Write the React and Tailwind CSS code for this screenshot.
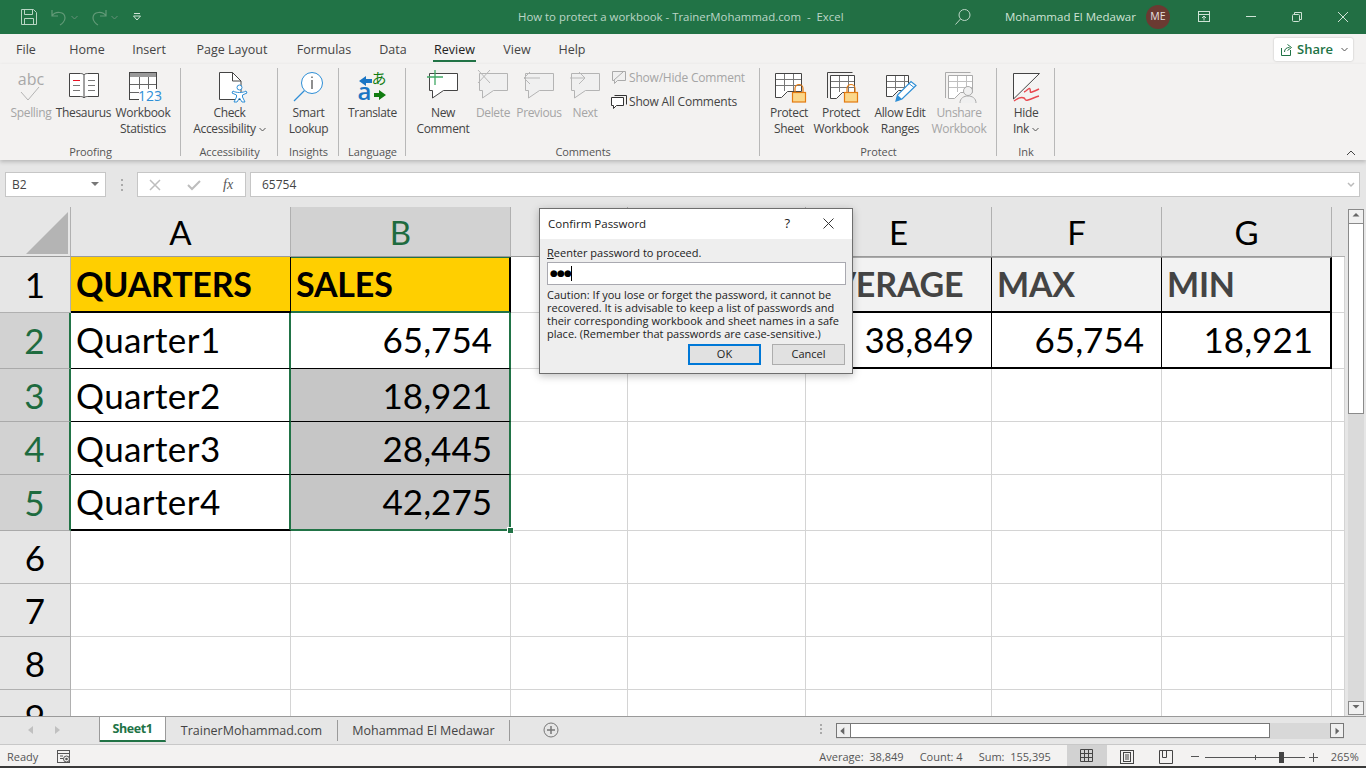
import React from "react";

const seg = "font-['Open_Sans','Noto_Sans',sans-serif]";
const calibri = "font-['Lato','Open_Sans',sans-serif]";

/* ---------- icons ---------- */
const Svg = ({ w = 32, h = 32, className = "", children }) => (
  <svg width={w} height={h} viewBox={`0 0 ${w} ${h}`} className={`overflow-visible ${className}`} fill="none">{children}</svg>
);

const AbcIcon = () => (
  <div className="relative w-[32px] h-[32px]">
    <div className="absolute top-0 left-0 w-[32px] text-center text-[16px] leading-[14px] text-[#a8a8a8]">abc</div>
    <svg width="32" height="32" className="absolute left-0 top-0" fill="none"><path d="M6 20l7 8 11-13" stroke="#b4b4b4" /></svg>
  </div>
);
const BookIcon = () => (
  <Svg>
    <path d="M1.500 1.500h11c1.500 0 3 .5 3.500 1.500.5-1 2-1.500 3.500-1.500h11v23h-11c-1.500 0-3 .5-3.500 1.500-.5-1-2-1.500-3.500-1.500h-11z" fill="#fff" stroke="#444" />
    <path d="M16 3v23" stroke="#444" />
    <path d="M5 8.500h7" stroke="#e81123" /><path d="M5 13.500h7M5 18.500h7M20 8.500h7M20 13.500h7M20 18.500h7" stroke="#777" />
  </Svg>
);
const StatsIcon = () => (
  <Svg>
    <rect x="2.500" y=".5" width="27" height="27" fill="#fff" stroke="#444" />
    <rect x="3" y="1" width="26" height="4" fill="#999" />
    <path d="M3 12.500h26M3 20.500h9M12.500 5v23M21.500 5v14" stroke="#666" />
    <rect x="12" y="17" width="18" height="12" fill="#fff" />
    <text x="11" y="29" fontSize="14" fill="#2f8fd6" fontFamily="Open Sans">123</text>
  </Svg>
);
const AccessIcon = () => (
  <Svg w={36} h={32}>
    <path d="M7.500.5h13l8.500 8.500v18.500H7.500z" fill="#fff" stroke="#444" />
    <path d="M20.500.5v8.500h8.500" stroke="#444" />
    <circle cx="27.500" cy="15.500" r="2.500" fill="#fff" stroke="#2f8fd6" />
    <path d="M21 19c3 2 10 2 13 0l1 2-4.500 2v2l2.500 5h-3l-2.500-4-2.500 4h-3l2.500-5v-2l-4.500-2z" fill="#fff" stroke="#2f8fd6" />
  </Svg>
);
const SmartIcon = () => (
  <Svg>
    <circle cx="19" cy="11" r="10.500" fill="#fff" stroke="#2f8fd6" />
    <path d="M11.500 18.500L1 29" stroke="#2f8fd6" strokeWidth="1.300" />
    <path d="M19 8v9" stroke="#444" strokeWidth="1.200" /><path d="M19 4.500v1.500" stroke="#444" strokeWidth="1.200" />
  </Svg>
);
const TranslateIcon = () => (
  <div className="relative w-[32px] h-[32px]">
    <svg width="32" height="32" className="absolute left-0 top-0">
      <path d="M2 9l7-5v3h6v4H9v3z" fill="#1a75c4" />
      <path d="M29 23l-7 5v-3h-5v-4h5v-3z" fill="#107c10" />
    </svg>
    <span className="absolute left-[15px] top-[-4px] text-[15px] leading-[20px] text-[#107c10] font-['Noto_Sans_CJK_JP',sans-serif]">あ</span>
    <span className={`absolute left-[1px] top-[7px] text-[24px] leading-[24px] font-semibold text-[#1a75c4] ${seg}`}>a</span>
  </div>
);
const Bubble = ({ stroke = "#444", fill = "#fff" }) => (
  <path d="M3.500 3.500h28v17h-14l-11 7.500v-7.500h-3z" fill={fill} stroke={stroke} />
);
const NewCIcon = () => (
  <Svg w={34} h={34} className="-mt-[2px]">
    <Bubble />
    <path d="M9 0v15M1 7h16" stroke="#3fa864" strokeWidth="1.300" />
  </Svg>
);
const DelCIcon = () => (
  <Svg w={34} h={34} className="-mt-[2px]">
    <Bubble stroke="#b4b4b4" fill="#f0f0f0" />
    <path d="M2 0l12 13M14 0L2 13" stroke="#b8b8b8" />
  </Svg>
);
const PrevCIcon = () => (
  <Svg w={34} h={34} className="-mt-[2px]">
    <Bubble stroke="#b4b4b4" fill="#f0f0f0" />
    <path d="M18 8H2M8 2L2 8l6 6" stroke="#b8b8b8" />
  </Svg>
);
const NextCIcon = () => (
  <Svg w={34} h={34} className="-mt-[2px]">
    <Bubble stroke="#b4b4b4" fill="#f0f0f0" />
    <path d="M2 8h15M11 2l6 6-6 6" stroke="#b8b8b8" />
  </Svg>
);
const SmallC1 = () => (
  <Svg w={16} h={16}>
    <path d="M1.500 1.500h13v9h-8l-3 3v-3h-2z" stroke="#aaa" fill="#f0f0f0" />
    <path d="M3 10l9-8" stroke="#aaa" />
  </Svg>
);
const SmallC2 = () => (
  <Svg w={16} h={16}>
    <path d="M3.500 1.500h12v9" stroke="#333" />
    <path d="M.5 3.500h12v8h-7l-3 3v-3h-2z" stroke="#333" fill="#fff" />
  </Svg>
);
const Lock = ({ x = 0, y = 0 }) => (
  <g transform={`translate(${x} ${y})`}>
    <path d="M3 8.500V4.500a4 4 0 0 1 8 0v4" stroke="#e37a10" strokeWidth="1.200" />
    <rect x=".5" y="8.500" width="13" height="9.500" fill="#fbd78a" stroke="#e37a10" strokeWidth="1.200" />
  </g>
);
const SheetGrid = ({ stroke = "#444", cell = "#777", x = 2, y = 1, w = 26, h = 24 }) => (
  <g>
    <path d={`M${x + .5} ${y + .5}h${w}v${h - 6}h-${w - 12}l-6 6h-6z`} fill="#fff" stroke={stroke} />
    <path d={`M${x + 9.500} ${y + 1}v${h - 7}M${x + 18.500} ${y + 1}v${h - 7}M${x + 1} ${y + 6.500}h${w - 1}M${x + 1} ${y + 12.500}h${w - 1}`} stroke={cell} />
  </g>
);
const ProtSheet = () => (
  <Svg><SheetGrid /><Lock x={19} y={12} /></Svg>
);
const ProtBook = () => (
  <Svg>
    <path d="M2.500 26V.5h25" stroke="#444" />
    <SheetGrid x={5} y={3} w={24} h={23} />
    <Lock x={19} y={12} />
  </Svg>
);
const AllowEdit = () => (
  <Svg>
    <SheetGrid x={2} y={3} w={22} h={21} />
    <path d="M12 29l1.500-6L27 9.500l5 4L18 27z" fill="#fff" stroke="#2f8fd6" strokeWidth="1.200" />
    <path d="M12 29l1.500-6 4.500 4z" fill="#2f8fd6" />
    <path d="M25 11.500l5 4" stroke="#2f8fd6" />
  </Svg>
);
const Unshare = () => (
  <Svg>
    <path d="M2.500 26V.5h25" stroke="#aaa" />
    <SheetGrid x={5} y={3} w={24} h={23} stroke="#aaa" cell="#c0c0c0" />
    <circle cx="25" cy="19" r="4.500" fill="#f0f0f0" stroke="#aaa" />
    <path d="M17 31c0-5 4-7 8-7s8 2 8 7" fill="#f0f0f0" stroke="#aaa" />
  </Svg>
);
const HideInk = () => (
  <Svg>
    <path d="M3.500 1.500h26L3.500 27z" fill="#fafafa" stroke="#444" />
    <path d="M14 20c3-1 5-5 6-3s-1 4 2 3 5-2 7-3" stroke="#e8484f" strokeWidth="1.400" />
    <path d="M4 29c4-3 8-4 10-3s0 3 4 2 7-3 11-4" stroke="#e8484f" strokeWidth="1.400" />
  </Svg>
);
const Chevron = ({ className = "" }) => (
  <svg width="7" height="5" viewBox="0 0 7 5" className={className} fill="none"><path d="M.5 1l3 3 3-3" stroke="#555" /></svg>
);

/* ---------- ribbon ---------- */
const RBtn = ({ icon, l1, l2, chev, dis, w }) => (
  <div className={`flex flex-col items-center shrink-0 ${w}`}>
    <div className="h-[33px] flex items-start justify-center">{icon}</div>
    <div className={`text-[12px] leading-[16px] text-center whitespace-nowrap tracking-[-0.35px] ${dis ? "text-[#a5a5a5]" : "text-[#444]"}`}>{l1}</div>
    {l2 && (
      <div className={`text-[12px] leading-[16px] text-center whitespace-nowrap tracking-[-0.35px] flex items-center justify-center gap-[3px] ${dis ? "text-[#a5a5a5]" : "text-[#444]"}`}>
        {l2}{chev && <Chevron />}
      </div>
    )}
  </div>
);

const Group = ({ label, w, children, left }) => (
  <div className={`relative flex flex-col h-[92px] mt-[4px] shrink-0 ${w}`}>
    <div className={`flex h-[77px] pt-[4px] ${left ? `justify-start ${left}` : "justify-center"}`}>{children}</div>
    <div className="text-[11px] leading-[14px] tracking-[-0.1px] text-center text-[#555] whitespace-nowrap">{label}</div>
    <div className="absolute right-0 top-0 w-[1px] h-[88px] bg-[#b8b8b8]" />
  </div>
);

const Tab = ({ children, active, w }) => (
  <div className={`relative h-[28px] flex items-center justify-center text-[12.500px] ${w} ${active ? "text-[#222] font-medium" : "text-[#444]"}`}>
    {children}
    {active && <div className="absolute left-0 right-0 bottom-[2px] h-[2px] bg-[#217346]" />}
  </div>
);

/* ---------- grid ---------- */
const colW = ["w-[220px]", "w-[220px]", "w-[117px]", "w-[178px]", "w-[186px]", "w-[170px]", "w-[170px]", "w-[13px]"];
const rows = [
  { n: "1", h: "h-[56px]" }, { n: "2", h: "h-[56px]", sel: true }, { n: "3", h: "h-[53px]", sel: true },
  { n: "4", h: "h-[53px]", sel: true }, { n: "5", h: "h-[56px]", sel: true }, { n: "6", h: "h-[53px]" },
  { n: "7", h: "h-[53px]" }, { n: "8", h: "h-[53px]" }, { n: "9", h: "h-[27px]", cut: true },
];

const cellData = {
  "1-0": { t: "QUARTERS", b: true, bg: "bg-[#ffcf00]", cls: "border-r-black border-b-[2px] border-b-black" },
  "1-1": { t: "SALES", b: true, bg: "bg-[#ffcf00]", cls: "border-r-[2px] border-r-black border-b-[2px] border-b-[#217346] border-t border-t-[#217346]" },
  "1-4": { t: "AVERAGE", b: true, bg: "bg-[#f2f2f2]", grey: true, cls: "border-r-black border-b-[2px] border-b-black border-t border-t-[#aaa]" },
  "1-5": { t: "MAX", b: true, bg: "bg-[#f2f2f2]", grey: true, cls: "border-r-black border-b-[2px] border-b-black border-t border-t-[#aaa]" },
  "1-6": { t: "MIN", b: true, bg: "bg-[#f2f2f2]", grey: true, cls: "border-r-[2px] border-r-black border-b-[2px] border-b-black border-t border-t-[#aaa]" },
  "2-0": { t: "Quarter1", label: true, cls: "border-r-[2px] border-r-[#217346] border-b-black pb-[2px]" },
  "3-0": { t: "Quarter2", label: true, cls: "border-r-[2px] border-r-[#217346] border-b-black" },
  "4-0": { t: "Quarter3", label: true, cls: "border-r-[2px] border-r-[#217346] border-b-black" },
  "5-0": { t: "Quarter4", label: true, cls: "border-r-[2px] border-r-[#217346] border-b-[2px] border-b-black pb-[2px]" },
  "2-1": { t: "65,754", right: true, cls: "border-r-[2px] border-r-[#217346] border-b-black pb-[2px]" },
  "3-1": { t: "18,921", right: true, bg: "bg-[#c6c6c6]", cls: "border-r-[2px] border-r-[#217346] border-b-black" },
  "4-1": { t: "28,445", right: true, bg: "bg-[#c6c6c6]", cls: "border-r-[2px] border-r-[#217346] border-b-black" },
  "5-1": { t: "42,275", right: true, bg: "bg-[#c6c6c6]", cls: "border-r-[2px] border-r-[#217346] border-b-[2px] border-b-[#217346] pb-[2px]" },
  "2-4": { t: "38,849", right: true, cls: "border-r-black border-b-[2px] border-b-black pb-[2px]" },
  "2-5": { t: "65,754", right: true, cls: "border-r-black border-b-[2px] border-b-black pb-[2px]" },
  "2-6": { t: "18,921", right: true, cls: "border-r-[2px] border-r-black border-b-[2px] border-b-black pb-[2px]" },
};

const Cell = ({ r, c }) => {
  const d = cellData[`${r}-${c}`];
  const base = `${colW[c]} shrink-0 h-full border-r border-b flex items-center overflow-hidden border-[#d4d4d4] ${calibri}`;
  if (!d) return <div className={`${base} bg-white`} />;
  return (
    <div className={`${base} ${d.bg || "bg-white"} ${d.cls} ${d.b ? "font-bold text-[34px] tracking-[-0.2px] pl-[5px] pb-[2px]" : "text-[35px] pl-[5px]"} ${d.label ? "tracking-[0.4px]" : ""} ${d.grey ? "text-[#444]" : "text-black"} ${d.right ? "justify-end pr-[17px]" : ""}`}>
      <span className="whitespace-nowrap">{d.t}</span>
    </div>
  );
};

const ArrowBtn = ({ dir }) => {
  const p = { up: "M4 7l4-4 4 4z", down: "M4 4l4 4 4-4z", left: "M9 3L4 7.500l5 4.500z", right: "M6 3l5 4.500L6 12z" }[dir];
  return <svg width="14" height="14" viewBox="0 0 16 15"><path d={p} fill="#666" /></svg>;
};

export default function App() {
  return (
    <div className={`relative w-[1366px] h-[768px] overflow-hidden bg-white flex flex-col ${seg}`}>
      {/* title bar */}
      <div className="h-[34px] shrink-0 bg-[#217346] flex items-center text-[#cfe3d6] text-[12px]">
        <div className="flex items-center pl-[20px] w-[518px] gap-[12px] shrink-0">
          <svg width="18" height="18" fill="none" viewBox="0 0 18 18"><path d="M1.500 1.500h12l3 3v12h-15z" stroke="#b9d6c4" /><path d="M4.500 1.500v5h8v-5M4.500 16.500v-6h9v6" stroke="#b9d6c4" /></svg>
          <div className="flex items-center gap-[3px]">
            <svg width="18" height="18" fill="none" viewBox="0 0 18 18"><path d="M2 2v6h6M2 8c3-5 13-5 13 2 0 3-3 6-5 7" stroke="#639a78" strokeWidth="1.200" /></svg>
            <Chevron className="opacity-50 invert" />
          </div>
          <div className="flex items-center gap-[3px]">
            <svg width="18" height="18" fill="none" viewBox="0 0 18 18"><path d="M16 2v6h-6M16 8c-3-5-13-5-13 2 0 3 3 6 5 7" stroke="#639a78" strokeWidth="1.200" /></svg>
            <Chevron className="opacity-50 invert" />
          </div>
          <svg width="10" height="10" fill="none" viewBox="0 0 10 10" className="ml-[2px]"><path d="M2 1.500h6" stroke="#cfe3d6" /><path d="M1.500 4l3.500 4 3.500-4z" stroke="#cfe3d6" /></svg>
        </div>
        <div className="w-[332px] shrink-0 text-[11.400px] whitespace-pre text-[#bcd6c6]">How to protect a workbook - TrainerMohammad.com  -  Excel</div>
        <div className="flex items-center flex-1 h-full bg-[#226f44]">
          <svg width="18" height="18" fill="none" viewBox="0 0 18 18" className="ml-[104px]"><circle cx="10.500" cy="7" r="5.500" stroke="#bcd6c6" /><path d="M6.500 11l-5 5.500" stroke="#bcd6c6" /></svg>
          <div className="ml-[33px] w-[130px] shrink-0 text-[11.500px] text-[#cfe3d6] whitespace-nowrap">Mohammad El Medawar</div>
          <div className="ml-[11px] w-[24px] h-[24px] rounded-full bg-[#6b3a32] flex items-center justify-center text-[10.500px] text-[#e8e0e0]">ME</div>
          <svg width="14" height="14" fill="none" viewBox="0 0 14 14" className="ml-[27px]"><rect x="1.500" y="1.500" width="11" height="10" stroke="#cfe3d6" /><path d="M1.500 4.500h11M7 10.500V6M5 8l2-2 2 2" stroke="#cfe3d6" /></svg>
          <svg width="10" height="2" className="ml-[35px]"><path d="M0 .5h10" stroke="#cfe3d6" /></svg>
          <svg width="12" height="12" fill="none" viewBox="0 0 12 12" className="ml-[35px]"><rect x="1.500" y="3.500" width="7" height="7" rx="1" stroke="#cfe3d6" /><path d="M3.500 3V1.500h7v7H9" stroke="#cfe3d6" /></svg>
          <svg width="12" height="12" fill="none" viewBox="0 0 12 12" className="ml-[34px]"><path d="M1 1l10 10M11 1L1 11" stroke="#cfe3d6" /></svg>
        </div>
      </div>

      {/* tabs */}
      <div className="h-[30px] shrink-0 bg-[#f3f2f1] flex items-start pt-[2px] pl-[9px] relative">
        <Tab w="w-[34px]">File</Tab>
        <Tab w="w-[38px] ml-[25px]">Home</Tab>
        <Tab w="w-[34px] ml-[26px]">Insert</Tab>
        <Tab w="w-[74px] ml-[29px]">Page Layout</Tab>
        <Tab w="w-[54px] ml-[28px]">Formulas</Tab>
        <Tab w="w-[28px] ml-[28px]">Data</Tab>
        <Tab w="w-[43px] ml-[26px]" active>Review</Tab>
        <Tab w="w-[30px] ml-[26px]">View</Tab>
        <Tab w="w-[28px] ml-[26px]">Help</Tab>
        <div className="absolute left-[1274px] top-[4px] w-[79px] h-[23px] bg-white rounded-[2px] shadow-[0_0_2px_rgba(0,0,0,0.25)] flex items-center pl-[6px] gap-[5px] text-[13px] font-semibold text-[#217346]">
          <svg width="12" height="13" viewBox="0 0 12 13" fill="none"><path d="M1.500 5v7.500h9V7M4.500 9c0-3 2-4.500 5-4.500M7.500 1.500l4 3-4 3" stroke="#217346" /></svg>
          <span>Share</span>
          <Chevron className="ml-[3px]" />
        </div>
      </div>

      {/* ribbon */}
      <div className="h-[96px] shrink-0 bg-[#f3f2f1] flex items-start shadow-[0_2px_4px_rgba(0,0,0,0.2)] relative z-10">
        <Group label="Proofing" w="w-[181px]" left="pl-[10px]">
          <RBtn w="w-[42px]" dis icon={<AbcIcon />} l1="Spelling" />
          <RBtn w="w-[63px]" icon={<BookIcon />} l1="Thesaurus" />
          <RBtn w="w-[56px]" icon={<StatsIcon />} l1="Workbook" l2="Statistics" />
        </Group>
        <Group label="Accessibility" w="w-[97px]">
          <RBtn w="w-[80px]" icon={<AccessIcon />} l1="Check" l2="Accessibility" chev />
        </Group>
        <Group label="Insights" w="w-[61px]">
          <RBtn w="w-[50px]" icon={<SmartIcon />} l1="Smart" l2="Lookup" />
        </Group>
        <Group label="Language" w="w-[67px]">
          <RBtn w="w-[50px]" icon={<TranslateIcon />} l1="Translate" />
        </Group>
        <Group label="Comments" w="w-[354px]" left="pl-[10px]">
          <RBtn w="w-[54px]" icon={<NewCIcon />} l1="New" l2="Comment" />
          <RBtn w="w-[46px]" dis icon={<DelCIcon />} l1="Delete" />
          <RBtn w="w-[46px]" dis icon={<PrevCIcon />} l1="Previous" />
          <RBtn w="w-[46px]" dis icon={<NextCIcon />} l1="Next" />
          <div className="flex flex-col gap-[8px] ml-[3px] -mt-[2px] tracking-[-0.2px]">
            <div className="flex items-center gap-[2px] text-[12px] leading-[16px] text-[#a5a5a5]"><SmallC1 />Show/Hide Comment</div>
            <div className="flex items-center gap-[2px] text-[12px] leading-[16px] text-[#444]"><SmallC2 />Show All Comments</div>
          </div>
        </Group>
        <Group label="Protect" w="w-[237px]" left="pl-[6px]">
          <RBtn w="w-[46px]" icon={<ProtSheet />} l1="Protect" l2="Sheet" />
          <RBtn w="w-[58px]" icon={<ProtBook />} l1="Protect" l2="Workbook" />
          <RBtn w="w-[60px]" icon={<AllowEdit />} l1="Allow Edit" l2="Ranges" />
          <RBtn w="w-[58px]" dis icon={<Unshare />} l1="Unshare" l2="Workbook" />
        </Group>
        <Group label="Ink" w="w-[58px]">
          <RBtn w="w-[50px]" icon={<HideInk />} l1="Hide" l2="Ink" chev />
        </Group>
        <svg width="10" height="6" className="absolute left-[1346px] top-[86px]" fill="none"><path d="M1 5l4-4 4 4" stroke="#444" /></svg>
      </div>

      {/* formula bar */}
      <div className="h-[47px] shrink-0 bg-[#e6e6e6] flex items-start pt-[12px] pl-[5px]">
        <div className="w-[101px] h-[25px] bg-white border border-[#c6c6c6] flex items-center pl-[6px] text-[12px] text-[#444]">
          <span className="flex-1">B2</span>
          <svg width="8" height="5" className="mr-[6px]"><path d="M0 0h8L4 4z" fill="#777" /></svg>
        </div>
        <div className="w-[31px] h-[25px] flex items-center justify-center">
          <div className="flex flex-col gap-[3px]"><div className="w-[2px] h-[2px] bg-[#aaa]" /><div className="w-[2px] h-[2px] bg-[#aaa]" /><div className="w-[2px] h-[2px] bg-[#aaa]" /></div>
        </div>
        <div className="w-[109px] h-[25px] bg-white border border-[#c6c6c6] flex items-center">
          <svg width="12" height="12" fill="none" className="ml-[11px]"><path d="M1 1l10 10M11 1L1 11" stroke="#bdbdbd" strokeWidth="1.500" /></svg>
          <svg width="14" height="12" fill="none" className="ml-[26px]"><path d="M1 6l4 4 8-8" stroke="#bdbdbd" strokeWidth="2" /></svg>
          <span className="ml-[22px] text-[14px] italic font-['Liberation_Serif',serif] text-[#555]">fx</span>
        </div>
        <div className="ml-[4px] w-[1110px] h-[25px] bg-white border border-[#c6c6c6] flex items-center pl-[11px] text-[12px] text-[#444] relative">
          65754
          <svg width="8" height="6" fill="none" className="absolute right-[4px] top-[9px]"><path d="M1 1l3 3 3-3" stroke="#bbb" strokeWidth="1.500" /></svg>
        </div>
      </div>

      {/* sheet */}
      <div className="h-[510px] shrink-0 flex bg-[#e6e6e6] border-b border-[#9a9a9a]">
        <div className="w-[1345px] shrink-0 flex flex-col overflow-hidden">
          {/* column headers */}
          <div className="h-[50px] shrink-0 flex">
            <div className="w-[71px] shrink-0 relative border-r border-[#b0b0b0] border-b border-b-[#9a9a9a]">
              <svg width="42" height="42" className="absolute right-[2px] bottom-[2px]"><path d="M42 0v42H0z" fill="#b4b4b4" /></svg>
            </div>
            {["A", "B", "", "", "E", "F", "G"].map((l, i) => (
              <div key={i} className={`${colW[i]} shrink-0 border-r border-[#b0b0b0] border-b border-b-[#9a9a9a] flex items-center justify-center ${calibri} text-[33px] pt-[3px] ${l === "B" ? "bg-[#d2d2d2] text-[#1e6b3f]" : "text-black"}`}>{l}</div>
            ))}
            <div className="flex-1 border-b border-[#b0b0b0]" />
          </div>
          {/* rows */}
          {rows.map((row, r) => (
            <div key={row.n} className={`${row.h} shrink-0 flex`}>
              <div className={`w-[71px] shrink-0 h-full border-r border-b overflow-hidden flex justify-center ${row.cut ? "items-start" : "items-center"} ${calibri} text-[35px] ${row.sel ? "bg-[#d2d2d2] text-[#1e6b3f] border-r-[2px] border-r-[#217346] border-b-[#aaa]" : "text-black border-[#b0b0b0]"}`}>
                {row.n}
              </div>
              {colW.map((_, c) => <Cell key={c} r={r + 1} c={c} />)}
            </div>
          ))}
        </div>
        {/* v scrollbar */}
        <div className="flex-1 pl-[3px] flex flex-col">
          <div className="mt-[2px] w-[16px] h-[15px] border border-[#8a8a8a] flex items-center justify-center bg-[#f0f0f0]"><ArrowBtn dir="up" /></div>
          <div className="w-[16px] h-[190px] bg-white border border-[#8a8a8a] border-t-0" />
          <div className="w-[16px] flex-1 bg-[#dadada]" />
          <div className="w-[16px] h-[14px] border border-[#8a8a8a] flex items-center justify-center bg-[#f0f0f0] mb-[1px]"><ArrowBtn dir="down" /></div>
        </div>
      </div>

      {/* sheet tabs */}
      <div className="h-[28px] shrink-0 bg-[#e6e6e6] border-b border-[#c8c8c8] flex items-start text-[12.500px] text-[#444]">
        <div className="w-[100px] shrink-0 flex items-center justify-start h-[25px] pl-[28px] gap-[22px] border-r border-[#9a9a9a]">
          <svg width="5" height="8"><path d="M5 0v8L0 4z" fill="#c0c0c0" /></svg>
          <svg width="5" height="8"><path d="M0 0v8l5-4z" fill="#c0c0c0" /></svg>
        </div>
        <div className="w-[66px] h-[25px] shrink-0 bg-white border-r border-[#9a9a9a] border-b-[2px] border-b-[#217346] flex items-center justify-center font-bold text-[#217346] tracking-[-0.4px] pt-[1px]">Sheet1</div>
        <div className="w-[172px] h-[21px] mt-[3px] pt-[1px] shrink-0 border-r border-[#9a9a9a] flex items-center justify-center">TrainerMohammad.com</div>
        <div className="w-[172px] h-[21px] mt-[3px] pt-[1px] shrink-0 border-r border-[#9a9a9a] flex items-center justify-center">Mohammad El Medawar</div>
        <svg width="16" height="16" fill="none" className="ml-[33px] mt-[5px]"><circle cx="8" cy="8" r="7" stroke="#777" /><path d="M8 4v8M4 8h8" stroke="#777" strokeWidth="1.500" /></svg>
        <div className="ml-[261px] mt-[7px] flex flex-col gap-[2px]"><div className="w-[2px] h-[2px] bg-[#aaa]" /><div className="w-[2px] h-[2px] bg-[#aaa]" /><div className="w-[2px] h-[2px] bg-[#aaa]" /></div>
        <div className="ml-[14px] mt-[6px] w-[508px] h-[16px] flex bg-[#d8d8d8]">
          <div className="w-[15px] h-[15px] bg-[#f0f0f0] border border-[#777] flex items-center justify-center"><ArrowBtn dir="left" /></div>
          <div className="w-[419px] h-[15px] bg-white border border-[#777] border-l-0" />
          <div className="flex-1" />
          <div className="w-[14px] h-[15px] bg-[#f0f0f0] border border-[#777] flex items-center justify-center"><ArrowBtn dir="right" /></div>
        </div>
      </div>

      {/* status bar */}
      <div className="h-[21px] shrink-0 bg-[#f3f2f1] flex items-center text-[11px] text-[#555] pt-[3px]">
        <span className="ml-[7px]">Ready</span>
        <svg width="14" height="14" fill="none" className="ml-[19px]"><rect x=".5" y=".5" width="12" height="12" stroke="#555" /><path d="M1 3.500h11M3 6h3M3 8.500h3" stroke="#555" /><circle cx="9.500" cy="9" r="3" fill="#f3f2f1" stroke="#555" /><circle cx="9.500" cy="9" r="1.300" fill="#555" /></svg>
        <span className="ml-[748px] whitespace-pre">Average:  38,849</span>
        <span className="ml-[16px] whitespace-pre">Count: 4</span>
        <span className="ml-[16px] whitespace-pre">Sum:  155,395</span>
        <div className="ml-[16px] w-[40px] h-[21px] -mt-[3px] bg-[#d2d2d2] flex items-center justify-center">
          <svg width="13" height="13" fill="none"><path d="M.5.5h12v12H.5zM4.500.5v12M8.500.5v12M.5 4.500h12M.5 8.500h12" stroke="#444" /></svg>
        </div>
        <svg width="14" height="14" fill="none" className="ml-[13px]"><rect x=".5" y=".5" width="13" height="13" stroke="#444" /><rect x="3.500" y="2.500" width="7" height="9" stroke="#444" /><path d="M5 5h4M5 7h4M5 9h4" stroke="#444" /></svg>
        <svg width="14" height="14" fill="none" className="ml-[25px]"><path d="M.5.5h13v13H.5zM3.500.5v7h4V.5" stroke="#444" /></svg>
        <svg width="8" height="2" className="ml-[18px]"><path d="M0 .5h8" stroke="#555" /></svg>
        <div className="ml-[6px] w-[100px] h-[1px] bg-[#555] relative">
          <div className="absolute left-[50px] -top-[2px] w-[1px] h-[5px] bg-[#555]" />
          <div className="absolute left-[74px] -top-[5px] w-[5px] h-[11px] bg-[#444]" />
        </div>
        <svg width="9" height="9" className="ml-[4px]"><path d="M4.500 0v9M0 4.500h9" stroke="#555" /></svg>
        <span className="ml-[13px]">265%</span>
      </div>
      <div className="h-[2px] shrink-0 bg-[#3a3a3a]" />

      {/* selection handle */}
      <div className="absolute left-[507px] top-[527px] w-[7px] h-[7px] bg-[#217346] border border-white" />

      {/* dialog */}
      <div className="absolute left-[539px] top-[208px] w-[314px] h-[166px] bg-[#eeeeee] border border-[#6e6e6e] shadow-[0_2px_8px_rgba(0,0,0,0.25)] flex flex-col z-20">
        <div className="h-[30px] shrink-0 bg-white flex items-center pl-[8px] pb-[1px] text-[11.500px] text-[#222]">
          <span className="flex-1">Confirm Password</span>
          <span className="text-[13px] mr-[33px]">?</span>
          <svg width="11" height="11" fill="none" className="mr-[18px]"><path d="M.5.5l10 10M10.500.5l-10 10" stroke="#333" /></svg>
        </div>
        <div className="flex flex-col pl-[7px] pr-[6px] text-[11px] text-[#222]">
          <div className="mt-[6px] leading-[15px]"><span className="underline">R</span>eenter password to proceed.</div>
          <div className="mt-[2px] h-[23px] w-[299px] bg-white border border-[#a9a9b0] flex items-center pl-[2px] text-[9px] font-['DejaVu_Sans',sans-serif] tracking-[-0.9px] text-black">
            ●●●<span className="w-[1px] h-[15px] bg-black" />
          </div>
          <div className="mt-[3px] text-[11px] leading-[13px] whitespace-pre-line">{"Caution: If you lose or forget the password, it cannot be\nrecovered. It is advisable to keep a list of passwords and\ntheir corresponding workbook and sheet names in a safe\nplace. (Remember that passwords are case-sensitive.)"}</div>
          <div className="flex justify-end gap-[11px] mt-[4px] mr-[1px]">
            <div className="w-[73px] h-[21px] border-[2px] border-[#0078d7] bg-[#e1e1e1] flex items-center justify-center text-[11px]">OK</div>
            <div className="w-[73px] h-[21px] border border-[#adadad] bg-[#e1e1e1] flex items-center justify-center text-[11px]">Cancel</div>
          </div>
        </div>
      </div>
    </div>
  );
}
